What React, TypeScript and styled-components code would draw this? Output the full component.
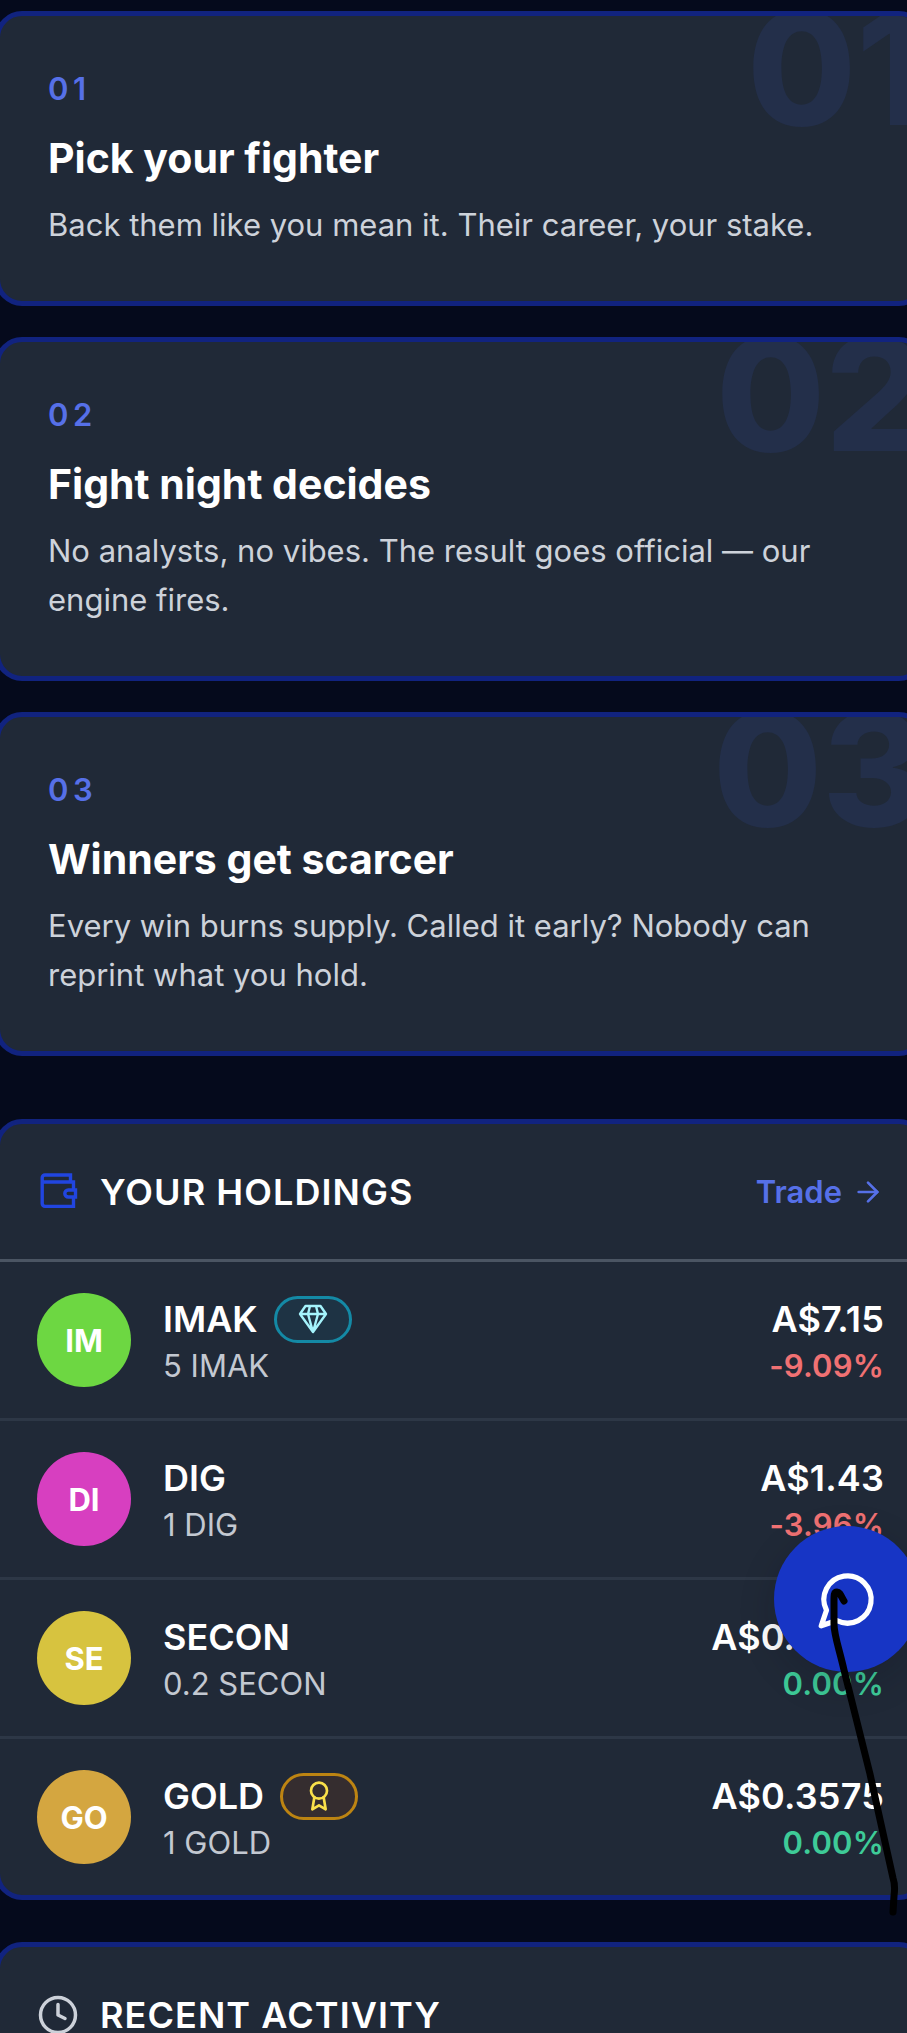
import React from 'react';
import styled, { createGlobalStyle, css } from 'styled-components';
import { ArrowRight, Clock } from 'lucide-react';

const GlobalStyle = createGlobalStyle`
  *, *::before, *::after { box-sizing: border-box; }
  body { margin: 0; background: #050a1c; }
  h2, h3, p, ol, ul { margin: 0; padding: 0; }
  ol, ul { list-style: none; }
  button, a { font: inherit; color: inherit; }
`;

const Page = styled.div`
  position: relative;
  height: 100vh;
  overflow: hidden auto;
  scrollbar-width: none;
  background: #050a1c;
  color: #ffffff;
  font-family: Inter, 'Liberation Sans', sans-serif;
`;

const Content = styled.main`
  display: flex;
  flex-direction: column;
  gap: 42px;
  margin: 0 -19px 0 -5px;
  padding: 11px 0 40px;
`;

const panel = css`
  overflow: hidden;
  background: #202937;
  border: 5px solid #11237f;
  border-radius: 27px;
`;

const Steps = styled.ol`
  display: flex;
  flex-direction: column;
  gap: 31px;
  margin-bottom: 21px;
`;

const StepCard = styled.li`
  ${panel}
  position: relative;
  padding: 52px 48px;
`;

const Watermark = styled.span`
  position: absolute;
  top: -27px;
  right: -5px;
  color: #232f4a;
  font-size: 158px;
  font-weight: 800;
  line-height: 158px;
`;

const StepNumber = styled.p`
  margin-bottom: 22px;
  color: #5670e8;
  font-size: 31px;
  font-weight: 600;
  line-height: 42px;
  letter-spacing: 0.15em;
`;

const StepTitle = styled.h3`
  margin-bottom: 16px;
  font-size: 41px;
  font-weight: 700;
  line-height: 52px;
`;

const StepText = styled.p`
  color: #cdd2da;
  font-size: 31px;
  line-height: 49px;
`;

const Panel = styled.section`
  ${panel}
`;

const PanelHeader = styled.header`
  display: flex;
  align-items: center;
  gap: 21px;
  height: 138px;
  padding: 0 37px;
  border-bottom: 3px solid #4b5563;
`;

const PanelTitle = styled.h2`
  flex: 1;
  font-size: 36px;
  font-weight: 600;
  line-height: 48px;
  letter-spacing: 0.03em;
`;

const TradeLink = styled.a`
  display: flex;
  align-items: center;
  gap: 10px;
  color: #5670e8;
  font-size: 31px;
  font-weight: 600;
  line-height: 42px;
  text-decoration: none;
`;

const HoldingRow = styled.li`
  display: flex;
  align-items: center;
  gap: 32px;
  padding: 31px 37px;
  & + & { border-top: 3px solid #2d3746; }
`;

const Avatar = styled.span<{ $color: string }>`
  display: grid;
  place-items: center;
  flex: none;
  width: 94px;
  height: 94px;
  border-radius: 50%;
  background: ${(p) => p.$color};
  font-size: 31px;
  font-weight: 700;
`;

const Lines = styled.div<{ $end?: boolean }>`
  display: flex;
  flex-direction: column;
  gap: 2px;
  padding-top: 2px;
  ${(p) => (p.$end ? 'align-items: flex-end; letter-spacing: 0.01em;' : 'flex: 1;')}
`;

const NameLine = styled.div`
  display: flex;
  align-items: center;
  gap: 16px;
  font-size: 36px;
  font-weight: 600;
  line-height: 48px;
`;

const Amount = styled.p`
  color: #c3c8d1;
  font-size: 31px;
  line-height: 42px;
`;

const Change = styled.p<{ $down: boolean }>`
  color: ${(p) => (p.$down ? '#f07173' : '#3ecb98')};
  font-size: 31px;
  font-weight: 600;
  line-height: 42px;
`;

const Badge = styled.span<{ $tone: 'diamond' | 'gold' }>`
  display: grid;
  place-items: center;
  width: 78px;
  height: 47px;
  border: 3px solid ${(p) => (p.$tone === 'diamond' ? '#1489a5' : '#bd8412')};
  border-radius: 24px;
  background: ${(p) => (p.$tone === 'diamond' ? '#1e3344' : '#352d2f')};
  color: ${(p) => (p.$tone === 'diamond' ? '#a5f3fc' : '#fae04a')};
`;

const ChatButton = styled.button`
  position: absolute;
  right: -13px;
  bottom: 361px;
  display: grid;
  place-items: center;
  width: 146px;
  height: 146px;
  padding: 0;
  border: 0;
  border-radius: 50%;
  background: #1735c5;
  color: #ffffff;
  box-shadow: 0 12px 36px rgba(10, 16, 30, 0.2);
`;

const PenStroke = styled.svg`
  position: absolute;
  right: 0;
  bottom: 113px;
  pointer-events: none;
`;

const WalletIcon = () => (
  <svg width="42" height="42" viewBox="0 0 42 42" fill="none" stroke="#2145e0" strokeWidth="3.4" aria-hidden="true">
    <path d="M33.5 11V4H8a2.8 2.8 0 0 0-2.8 2.8V32.6A2.8 2.8 0 0 0 8 35.4H36.5V26M36.5 19V11H5.2" />
    <path d="M38.5 19H31.3a3.5 3.5 0 0 0 0 7h7.2z" />
  </svg>
);

const DiamondIcon = () => (
  <svg width="30" height="30" viewBox="0 0 30 30" fill="none" stroke="currentColor" strokeWidth="2.4" strokeLinejoin="round" aria-hidden="true">
    <path d="M7.5 2h15L28 10 15 28 2 10zM2 10h26M12 2l-2 8 5 18 5-18-2-8" />
  </svg>
);

const AwardIcon = () => (
  <svg width="32" height="32" viewBox="0 0 24 24" fill="none" stroke="currentColor" strokeWidth="2" strokeLinecap="round" strokeLinejoin="round" aria-hidden="true">
    <circle cx="12" cy="8" r="6" />
    <path d="M15.477 12.89 17 22l-5-3-5 3 1.523-9.11" />
  </svg>
);

const ChatIcon = () => (
  <svg width="63" height="63" viewBox="0 0 24 24" fill="none" stroke="currentColor" strokeWidth="2" strokeLinecap="round" strokeLinejoin="round" aria-hidden="true">
    <path d="M7.9 20A9 9 0 1 0 4 16.1L2 22Z" />
  </svg>
);

const steps = [
  { number: '01', title: 'Pick your fighter', text: 'Back them like you mean it. Their career, your stake.' },
  { number: '02', title: 'Fight night decides', text: 'No analysts, no vibes. The result goes official — our engine fires.' },
  { number: '03', title: 'Winners get scarcer', text: 'Every win burns supply. Called it early? Nobody can reprint what you hold.' },
];

type Holding = {
  name: string;
  amount: string;
  value: string;
  change: string;
  color: string;
  tier?: 'diamond' | 'gold';
};

const holdings: Holding[] = [
  { name: 'IMAK', amount: '5', value: 'A$7.15', change: '-9.09%', color: '#6dd742', tier: 'diamond' },
  { name: 'DIG', amount: '1', value: 'A$1.43', change: '-3.96%', color: '#d73fc0' },
  { name: 'SECON', amount: '0.2', value: 'A$0.2755', change: '0.00%', color: '#d7c33f' },
  { name: 'GOLD', amount: '1', value: 'A$0.3575', change: '0.00%', color: '#d4a640', tier: 'gold' },
];

export default function App() {
  return (
    <Page>
      <GlobalStyle />
      <Content>
        <Steps>
          {steps.map((s) => (
            <StepCard key={s.number}>
              <Watermark aria-hidden="true">{s.number}</Watermark>
              <StepNumber>{s.number}</StepNumber>
              <StepTitle>{s.title}</StepTitle>
              <StepText>{s.text}</StepText>
            </StepCard>
          ))}
        </Steps>

        <Panel>
          <PanelHeader>
            <WalletIcon />
            <PanelTitle>YOUR HOLDINGS</PanelTitle>
            <TradeLink href="#trade">
              Trade
              <ArrowRight size={32} strokeWidth={2} />
            </TradeLink>
          </PanelHeader>
          <ul>
            {holdings.map((h) => (
              <HoldingRow key={h.name}>
                <Avatar $color={h.color}>{h.name.slice(0, 2)}</Avatar>
                <Lines>
                  <NameLine>
                    {h.name}
                    {h.tier && (
                      <Badge $tone={h.tier}>
                        {h.tier === 'diamond' ? <DiamondIcon /> : <AwardIcon />}
                      </Badge>
                    )}
                  </NameLine>
                  <Amount>{h.amount} {h.name}</Amount>
                </Lines>
                <Lines $end>
                  <NameLine>{h.value}</NameLine>
                  <Change $down={h.change.startsWith('-')}>{h.change}</Change>
                </Lines>
              </HoldingRow>
            ))}
          </ul>
        </Panel>

        <Panel>
          <PanelHeader>
            <Clock size={42} strokeWidth={2} color="#ccd1d9" />
            <PanelTitle>RECENT ACTIVITY</PanelTitle>
          </PanelHeader>
        </Panel>
      </Content>

      <ChatButton aria-label="Open chat">
        <ChatIcon />
      </ChatButton>
      <PenStroke width="80" height="340" viewBox="0 0 80 340" fill="none" aria-hidden="true">
        <path
          d="M17 21C14 16 13 12 10 12C7 12 7 15 7 22V44C7 55 12 68 17 90L43 194L52 235L66 298C68 304 68 309 67 316L66 332"
          stroke="#000000"
          strokeWidth="7"
          strokeLinecap="round"
          strokeLinejoin="round"
        />
      </PenStroke>
    </Page>
  );
}
